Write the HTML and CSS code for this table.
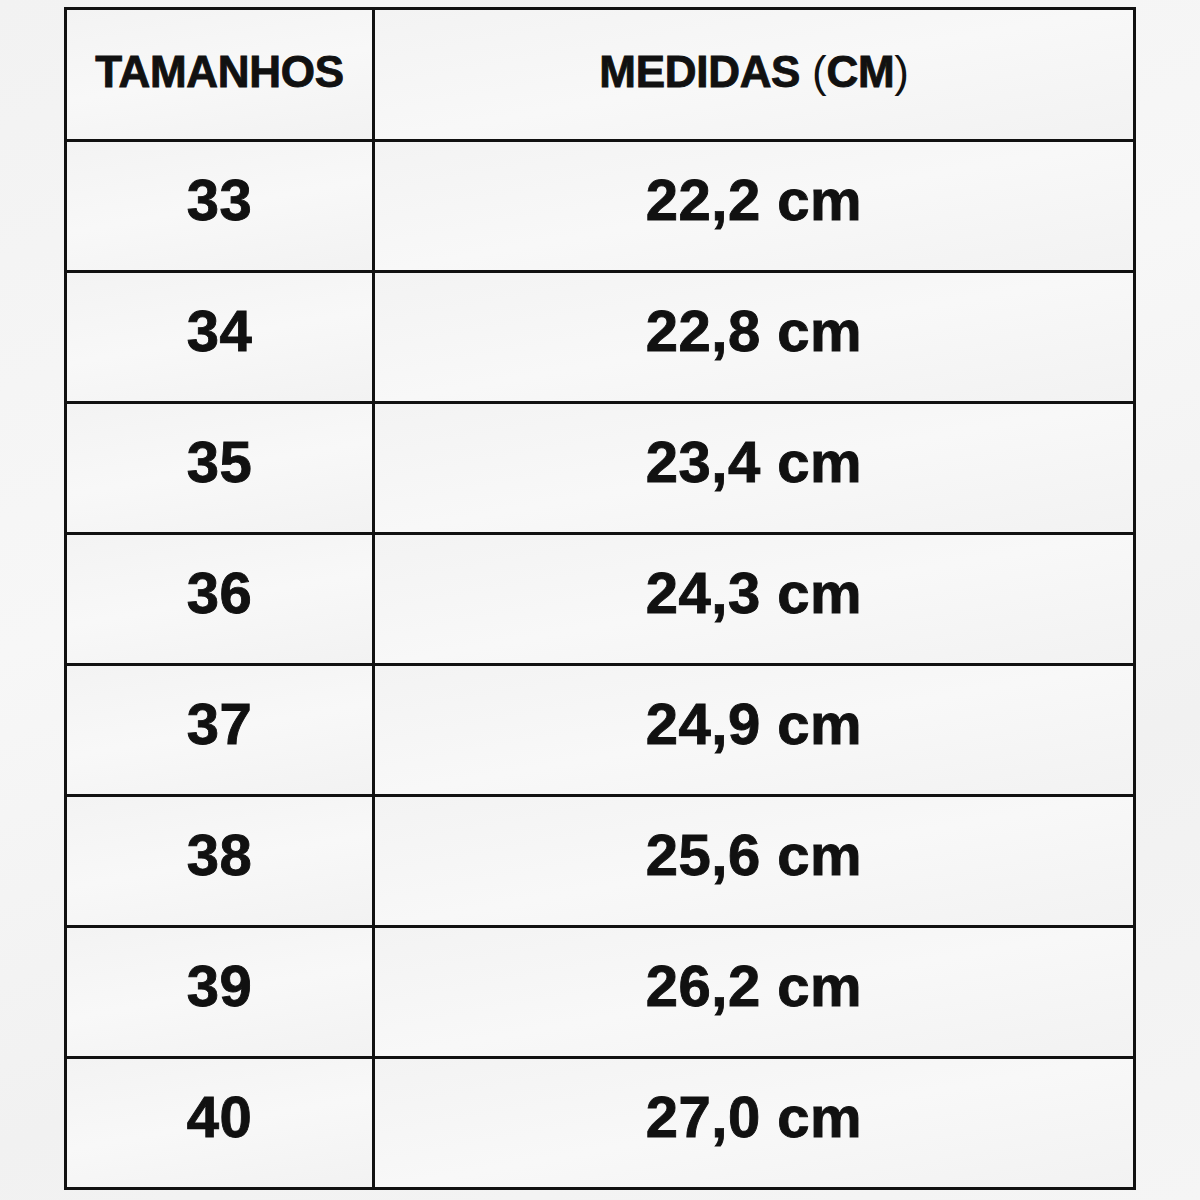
FILE: index.html
```html
<!DOCTYPE html>
<html lang="pt">
<head>
<meta charset="utf-8">
<link rel="stylesheet" href="styles.css">
</head>
<body>
<div class="table">
  <div class="cell head"><span>TAMANHOS</span></div>
  <div class="cell head"><span>MEDIDAS <span class="paren">(</span>CM<span class="paren">)</span></span></div>
  <div class="cell">33</div><div class="cell">22,2 cm</div>
  <div class="cell">34</div><div class="cell">22,8 cm</div>
  <div class="cell">35</div><div class="cell">23,4 cm</div>
  <div class="cell">36</div><div class="cell">24,3 cm</div>
  <div class="cell">37</div><div class="cell">24,9 cm</div>
  <div class="cell">38</div><div class="cell">25,6 cm</div>
  <div class="cell">39</div><div class="cell">26,2 cm</div>
  <div class="cell">40</div><div class="cell">27,0 cm</div>
</div>
</body>
</html>
```
FILE: styles.css
```css
html, body {
  margin: 0;
  padding: 0;
}
body {
  width: 1200px;
  height: 1200px;
  background: linear-gradient(160deg, #f2f2f2 0%, #f7f7f7 40%, #f1f1f1 70%, #f5f5f5 100%);
  font-family: "Liberation Sans", Arial, sans-serif;
  color: #111;
  padding-top: 7px;
  box-sizing: border-box;
}
.table {
  margin-left: 64px;
  width: 1072px;
  box-sizing: border-box;
  display: grid;
  grid-template-columns: 305px 758px;
  grid-template-rows: 129px repeat(8, 128px);
  gap: 3px;
  padding: 3px;
  background: #111;
}
.cell {
  background: linear-gradient(170deg, #f3f3f3 0%, #f8f8f8 50%, #f2f2f2 100%);
  display: flex;
  align-items: center;
  justify-content: center;
  font-weight: 700;
  font-size: 58px;
  letter-spacing: 0.5px;
  padding-bottom: 14px;
  box-sizing: border-box;
  -webkit-text-stroke: 0.9px #111;
}
.head {
  font-size: 44px;
  padding-bottom: 6px;
  letter-spacing: -0.3px;
}
.paren {
  font-weight: 400;
  -webkit-text-stroke: 0;
}
```
